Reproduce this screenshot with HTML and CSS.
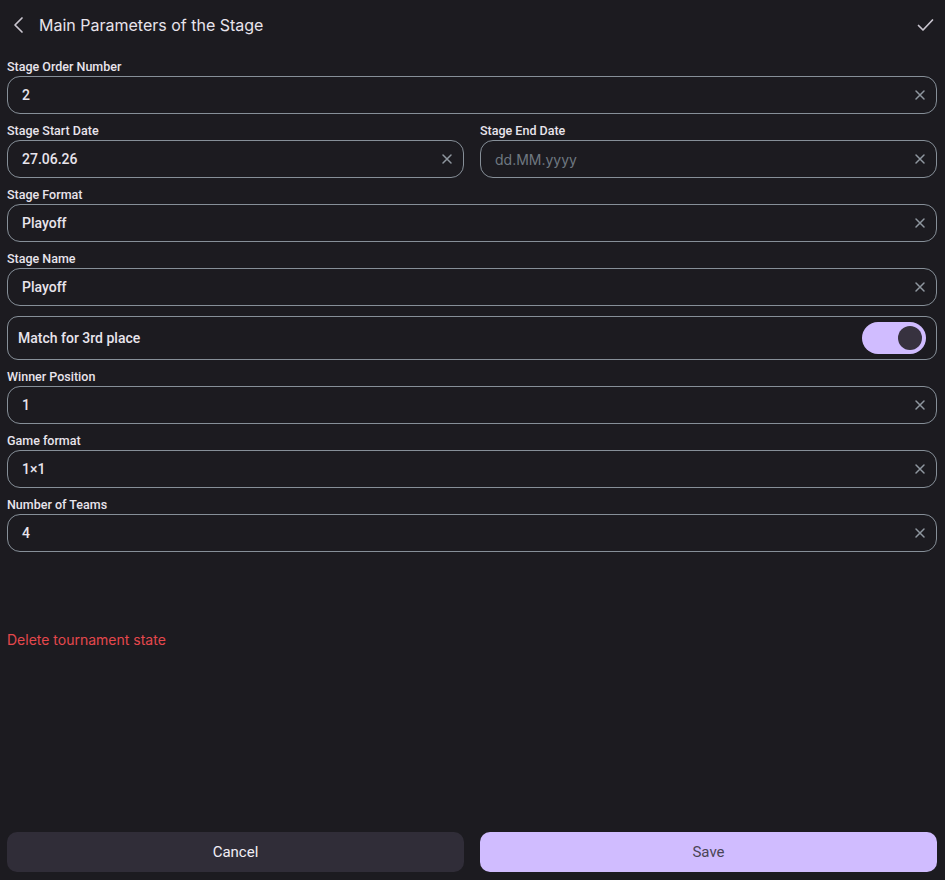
FILE: index.html
```html
<!DOCTYPE html>
<html lang="en">
<head>
  <meta charset="UTF-8" />
  <title>Main Parameters of the Stage</title>
  <meta name="viewport" content="width=device-width, initial-scale=1.0" />
  <link rel="stylesheet" href="styles.css">
</head>
<body>
  <div class="screen">
    <header class="topbar">
      <button class="icon-btn back" aria-label="Back">
        <svg width="24" height="24" viewBox="0 0 24 24"><path d="M15 5l-7 7 7 7" fill="none" stroke="#c9c5cf" stroke-width="1.7" stroke-linecap="round" stroke-linejoin="round"/></svg>
      </button>
      <h1>Main Parameters of the Stage</h1>
      <button class="icon-btn done" aria-label="Done">
        <svg width="24" height="24" viewBox="0 0 24 24"><path d="M4.5 12.5l4.5 4.5 9.5-10" fill="none" stroke="#c9c5cf" stroke-width="1.7" stroke-linecap="round" stroke-linejoin="round"/></svg>
      </button>
    </header>

    <form class="form">
      <div class="field">
        <label>Stage Order Number</label>
        <div class="input-box"><span class="value">2</span><span class="clear"></span></div>
      </div>

      <div class="row">
        <div class="field">
          <label>Stage Start Date</label>
          <div class="input-box"><span class="value">27.06.26</span><span class="clear"></span></div>
        </div>
        <div class="field">
          <label>Stage End Date</label>
          <div class="input-box"><span class="value placeholder">dd.MM.yyyy</span><span class="clear"></span></div>
        </div>
      </div>

      <div class="field">
        <label>Stage Format</label>
        <div class="input-box"><span class="value">Playoff</span><span class="clear"></span></div>
      </div>

      <div class="field">
        <label>Stage Name</label>
        <div class="input-box"><span class="value">Playoff</span><span class="clear"></span></div>
      </div>

      <div class="switch-row">
        <span>Match for 3rd place</span>
        <span class="switch on"><span class="thumb"></span></span>
      </div>

      <div class="field">
        <label>Winner Position</label>
        <div class="input-box"><span class="value">1</span><span class="clear"></span></div>
      </div>

      <div class="field">
        <label>Game format</label>
        <div class="input-box"><span class="value">1×1</span><span class="clear"></span></div>
      </div>

      <div class="field">
        <label>Number of Teams</label>
        <div class="input-box"><span class="value">4</span><span class="clear"></span></div>
      </div>
    </form>

    <a class="danger-link" href="#">Delete tournament state</a>

    <div class="actions">
      <button class="btn btn-secondary">Cancel</button>
      <button class="btn btn-primary">Save</button>
    </div>
  </div>

  <script>
    document.querySelectorAll(".clear").forEach(el => {
      el.innerHTML = '<svg width="12" height="12" viewBox="0 0 12 12"><path d="M2 2l8 8M10 2l-8 8" stroke="#8f979f" stroke-width="1.5" stroke-linecap="round"/></svg>';
    });
  </script>
</body>
</html>
```

FILE: styles.css
```css
:root {
  --bg: #1c1b20;
  --text: #e8e4ec;
  --outline: #868f98;
  --muted: #6f7880;
  --primary: #d0bcff;
  --surface: #302d38;
  --danger: #e5484d;
}

* {
  box-sizing: border-box;
}

body {
  margin: 0;
  background: var(--bg);
  color: var(--text);
  font-family: 'Inter', 'Roboto', sans-serif;
}

.screen {
  height: 880px;
  display: flex;
  flex-direction: column;
  padding: 0 8px 8px 7px;
}

.topbar {
  height: 50px;
  display: flex;
  align-items: center;
}

.topbar h1 {
  flex: 1;
  margin: 0 0 0 8px;
  font-size: 16px;
  font-weight: 400;
}

.icon-btn {
  background: none;
  border: none;
  padding: 0;
  width: 24px;
  height: 24px;
  cursor: pointer;
}

.done {
  margin-right: -1px;
}

.form {
  display: flex;
  flex-direction: column;
  gap: 10px;
  padding-top: 10px;
  font-family: 'Roboto', sans-serif;
}

.row {
  display: grid;
  grid-template-columns: 1fr 1fr;
  gap: 16px;
}

.field label {
  display: block;
  height: 16px;
  font-size: 12.5px;
  font-weight: 500;
  line-height: 14px;
}

.input-box {
  height: 38px;
  border: 1px solid var(--outline);
  border-radius: 13px;
  display: flex;
  align-items: center;
  padding: 0 10px 0 14px;
}

.value {
  flex: 1;
  font-size: 14px;
  font-weight: 500;
}

.value.placeholder {
  font-family: 'Inter', sans-serif;
  color: var(--muted);
  font-weight: 400;
}

.clear {
  width: 12px;
  height: 12px;
  display: flex;
}

.switch-row {
  height: 44px;
  border: 1px solid var(--outline);
  border-radius: 11px;
  display: flex;
  align-items: center;
  justify-content: space-between;
  padding: 0 10px;
  font-size: 14px;
  font-weight: 500;
}

.switch {
  width: 64px;
  height: 32px;
  border-radius: 16px;
  background: var(--primary);
  display: flex;
  align-items: center;
  justify-content: flex-end;
  padding: 0 4px;
}

.switch .thumb {
  width: 24px;
  height: 24px;
  border-radius: 50%;
  background: #37323f;
}

.danger-link {
  margin-top: 78px;
  color: var(--danger);
  font-size: 14px;
  line-height: 20px;
  text-decoration: none;
  align-self: flex-start;
}

.actions {
  margin-top: auto;
  display: grid;
  grid-template-columns: 1fr 1fr;
  gap: 16px;
}

.btn {
  height: 40px;
  border: none;
  border-radius: 10px;
  font-family: 'Roboto', sans-serif;
  font-size: 15px;
  cursor: pointer;
}

.btn-secondary {
  background: var(--surface);
  color: #f2eff6;
}

.btn-primary {
  background: var(--primary);
  color: #4a4556;
}
```
